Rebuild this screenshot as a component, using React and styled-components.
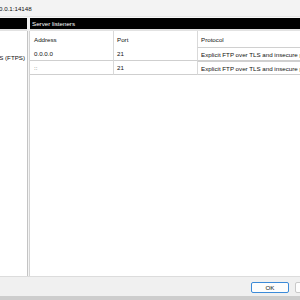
import React from "react";
import styled, { createGlobalStyle } from "styled-components";

const Global = createGlobalStyle`
  html, body { margin: 0; padding: 0; background: #f0f0f0; }
  body { font-family: "Liberation Sans", Arial, sans-serif; font-size: 6.2px; color: #111; }
  * { box-sizing: border-box; }
`;

const Window = styled.div`
  width: 300px;
  height: 300px;
  display: flex;
  flex-direction: column;
  overflow: hidden;
  background: #f0f0f0;
`;

const TitleBar = styled.div`
  height: 17px;
  flex: none;
  display: flex;
  align-items: center;
  background: #f3f3f3;
  border-bottom: 1px solid #e6e6e6;
  white-space: nowrap;
  overflow: hidden;
`;

const TitleText = styled.span`
  margin-left: -1px;
  color: #111;
`;

const Gap = styled.div`
  height: 1px;
  flex: none;
  background: #f7f7f7;
`;

const Body = styled.div`
  flex: 1;
  display: flex;
  min-height: 0;
  background: #fff;
  border-bottom: 1px solid #dcdcdc;
`;

const Pane = styled.div`
  display: flex;
  flex-direction: column;
  width: ${(p) => (p.$w ? `${p.$w}px` : "auto")};
  flex: ${(p) => (p.$w ? "none" : "1")};
  min-width: 0;
  background: #fff;
`;

const PaneHeader = styled.div`
  height: 13px;
  flex: none;
  background: #000;
  color: #fff;
  display: flex;
  align-items: center;
  padding-left: 2px;
  white-space: nowrap;
  overflow: hidden;
  border-bottom: 2px solid #e2e2e2;
`;

const Splitter = styled.div`
  width: 3px;
  flex: none;
  display: flex;
  flex-direction: column;
`;

const SplitTop = styled.div`
  height: 13px;
  flex: none;
  background: #f0f0f0;
`;

const SplitBody = styled.div`
  flex: 1;
  border-left: 1px solid #c4c4c4;
  border-right: 1px solid #d4d4d4;
  background: #f4f4f4;
`;

const TreeItem = styled.div`
  margin-top: 19px;
  height: 14px;
  display: flex;
  align-items: center;
  justify-content: flex-end;
  padding-right: 2px;
  overflow: hidden;
  white-space: nowrap;
`;

const Table = styled.div`
  display: grid;
  grid-template-columns: 83px 84px 1fr;
  white-space: nowrap;
`;

const Cell = styled.div`
  height: ${(p) => (p.$head ? 16 : 14)}px;
  display: flex;
  align-items: center;
  padding-left: ${(p) => (p.$first ? 4 : 3)}px;
  overflow: hidden;
  border-left: ${(p) => (p.$first ? "none" : "1px solid #d9d9d9")};
  border-bottom: ${(p) => (p.$head ? "none" : "1px solid #cfcfcf")};
  border-top: ${(p) => (p.$focus ? "1px solid #d0d0d0" : "none")};
  color: ${(p) => (p.$muted ? "#555" : "#111")};
`;

const Footer = styled.div`
  height: 19px;
  flex: none;
  display: flex;
  align-items: center;
  justify-content: flex-end;
  gap: 6px;
  padding-top: 1px;
  margin-right: -33px;
  background: #f0f0f0;
`;

const Button = styled.button`
  width: 38px;
  height: 11px;
  padding: 0;
  font: inherit;
  font-size: 6.2px;
  color: #111;
  background: #fdfdfd;
  border: 1px solid ${(p) => (p.$default ? "#3b8ad8" : "#c9c9c9")};
  border-radius: 2px;
  display: flex;
  align-items: center;
  justify-content: center;
`;

const Bottom = styled.div`
  height: 4px;
  flex: none;
  background: #cdcdcd;
`;

const rows = [
  { address: "0.0.0.0", port: "21", protocol: "Explicit FTP over TLS and insecure plain FTP" },
  { address: "::", port: "21", protocol: "Explicit FTP over TLS and insecure plain FTP" },
];

export default function App() {
  return (
    <>
      <Global />
      <Window>
        <TitleBar>
          <TitleText>0.0.1:14148</TitleText>
        </TitleBar>
        <Gap />
        <Body>
          <Pane $w={27}>
            <PaneHeader />
            <TreeItem>Explicit FTP over TLS (FTPS)</TreeItem>
          </Pane>
          <Splitter>
            <SplitTop />
            <SplitBody />
          </Splitter>
          <Pane>
            <PaneHeader>Server listeners</PaneHeader>
            <Table>
              <Cell $head $first>Address</Cell>
              <Cell $head>Port</Cell>
              <Cell $head>Protocol</Cell>
              {rows.map((r, i) => (
                <React.Fragment key={i}>
                  <Cell $first $muted={r.address === "::"}>{r.address}</Cell>
                  <Cell>{r.port}</Cell>
                  <Cell $focus>{r.protocol}</Cell>
                </React.Fragment>
              ))}
            </Table>
          </Pane>
        </Body>
        <Footer>
          <Button $default>OK</Button>
          <Button>Cancel</Button>
        </Footer>
        <Bottom />
      </Window>
    </>
  );
}
